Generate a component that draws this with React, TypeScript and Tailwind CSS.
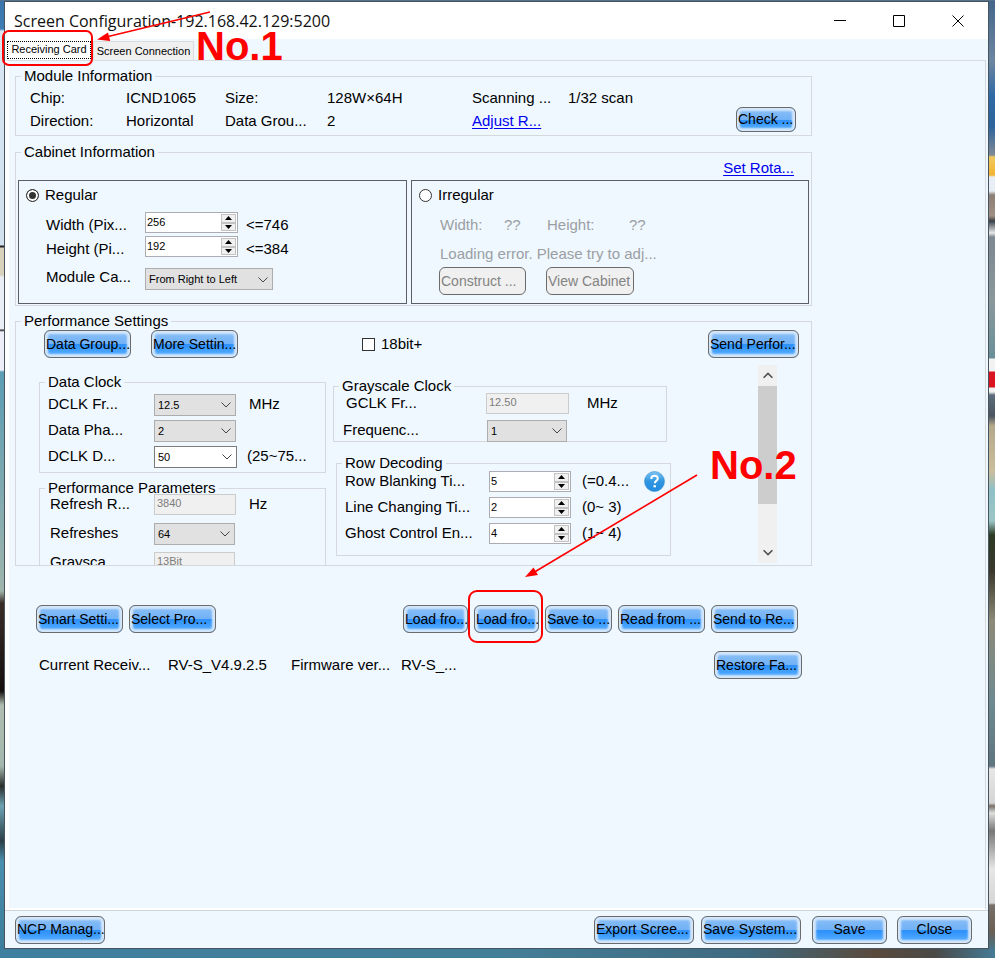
import type React from "react"

import { useState } from "react"
import clsx from "clsx"

function GlossyButton({ children, className, disabled }: { children: React.ReactNode; className?: string; disabled?: boolean }) {
  return (
    <button
      type="button"
      disabled={disabled}
      className={clsx(
        "shrink-0 overflow-hidden whitespace-nowrap rounded-[6px] border border-[#6b6b6b] px-px text-[14px]",
        disabled
          ? "bg-[#f0f0f0] text-[#838383]"
          : "bg-[linear-gradient(to_bottom,#8cc0f7_0%,#70b1f6_50%,#2c90fb_52%,#5cb2ff_100%)] shadow-[inset_0_0_2px_3px_#d3e6fa]",
        className,
      )}
    >
      {children}
    </button>
  )
}

function Group({ title, className, children }: { title: string; className?: string; children: React.ReactNode }) {
  return (
    <fieldset className={clsx("min-w-0 border border-[#d5d9de]", className)}>
      <legend className="ml-[5px] px-[3px] leading-[18px]">{title}</legend>
      {children}
    </fieldset>
  )
}

function Spinner({ id, value, className }: { id: string; value: number; className?: string }) {
  const [current, setCurrent] = useState(value)

  return (
    <div className={clsx("flex h-[21px] shrink-0 border border-[#abadb3] bg-white", className)}>
      <input
        id={id}
        value={current}
        onChange={(e) => setCurrent(Number(e.target.value) || 0)}
        className="h-[17px] w-0 flex-1 bg-transparent pl-px text-[11px] outline-none"
      />
      <div className="mr-px flex w-[15px] flex-col py-px">
        <button
          type="button"
          aria-label="Increase"
          onClick={() => setCurrent(current + 1)}
          className="flex flex-1 items-center justify-center border border-[#c3c3c3] bg-[#f0f0f0]"
        >
          <svg className="h-1 w-[7px]" viewBox="0 0 7 4">
            <path d="M3.5 0L7 4H0z" />
          </svg>
        </button>
        <button
          type="button"
          aria-label="Decrease"
          onClick={() => setCurrent(current - 1)}
          className="flex flex-1 items-center justify-center border border-[#c3c3c3] bg-[#f0f0f0]"
        >
          <svg className="h-1 w-[7px]" viewBox="0 0 7 4">
            <path d="M0 0h7L3.5 4z" />
          </svg>
        </button>
      </div>
    </div>
  )
}

function Dropdown({ id, value, className, light }: { id: string; value: string; className?: string; light?: boolean }) {
  return (
    <div className={clsx("relative h-[22px] shrink-0", className)}>
      <select
        id={id}
        className={clsx(
          "h-full w-full appearance-none border pl-[3px] text-[11px] outline-none",
          light ? "border-[#7a7a7a] bg-white" : "border-[#adadad] bg-[#e1e1e1]",
        )}
      >
        <option>{value}</option>
      </select>
      <svg
        className="pointer-events-none absolute top-[9px] right-[5px] h-[6px] w-[10px]"
        viewBox="0 0 10 6"
        fill="none"
        stroke="#444"
      >
        <path d="M0.5 0.5L5 5l4.500-4.500" />
      </svg>
    </div>
  )
}

function ReadOnly({ id, value, className }: { id: string; value: string; className?: string }) {
  return (
    <input
      id={id}
      disabled
      defaultValue={value}
      className={clsx("h-[21px] shrink-0 border border-[#cccccc] bg-[#f0f0f0] pb-[2px] pl-[2px] text-[11px] text-[#7d7d7d]", className)}
    />
  )
}

function Radio({ label, checked, onSelect }: { label: string; checked: boolean; onSelect: () => void }) {
  return (
    <label className="flex h-5 items-center gap-[6px]">
      <input
        type="radio"
        name="cabinet"
        checked={checked}
        onChange={onSelect}
        className="size-[13px] appearance-none rounded-full border border-[#333] bg-white checked:bg-[#333] checked:shadow-[inset_0_0_0_2px_white]"
      />
      {label}
    </label>
  )
}

function TitleBar() {
  return (
    <header className="flex h-[37px] items-center bg-white pr-px pl-[9px]">
      <h1 className="flex-1 font-['Open_Sans','Noto_Sans',sans-serif] text-[16px] text-[#111]">
        Screen Configuration-192.168.42.129:5200
      </h1>
      <button type="button" aria-label="Minimize" className="flex h-full w-[59px] items-center justify-center">
        <svg className="size-3" viewBox="0 0 12 12" stroke="black">
          <path d="M0 5.5h12" />
        </svg>
      </button>
      <button type="button" aria-label="Maximize" className="flex h-full w-[59px] items-center justify-center">
        <svg className="size-3" viewBox="0 0 12 12" fill="none" stroke="black">
          <path d="M0.5 0.5h11v11h-11z" />
        </svg>
      </button>
      <button type="button" aria-label="Close window" className="flex h-full w-[59px] items-center justify-center">
        <svg className="size-3" viewBox="0 0 12 12" fill="none" stroke="black">
          <path d="M0.5 0.5l11 11M11.500 0.5l-11 11" />
        </svg>
      </button>
    </header>
  )
}

function ModuleInformation() {
  return (
    <Group title="Module Information">
      <div className="flex items-end justify-between pt-px pr-[15px] pb-[3px] pl-[14px]">
        <dl className="grid grid-cols-[96px_99px_102px_145px_96px_auto] leading-[23px] whitespace-nowrap">
          <dt>Chip:</dt>
          <dd>ICND1065</dd>
          <dt>Size:</dt>
          <dd>128W×64H</dd>
          <dt>Scanning ...</dt>
          <dd>1/32 scan</dd>
          <dt>Direction:</dt>
          <dd>Horizontal</dd>
          <dt>Data Grou...</dt>
          <dd>2</dd>
          <dt>
            <a href="#adjust" className="text-[#0000ee] underline underline-offset-2">
              Adjust R...
            </a>
          </dt>
        </dl>
        <GlossyButton className="h-[25px] w-[60px] text-left">Check ...</GlossyButton>
      </div>
    </Group>
  )
}

function CabinetInformation() {
  const [kind, setKind] = useState("regular")

  return (
    <Group title="Cabinet Information" className="mt-[7px]">
      <div className="flex h-[19px] items-start justify-end pr-[17px]">
        <a href="#rotation" className="leading-[14px] text-[#0000ee] underline underline-offset-2">
          Set Rota...
        </a>
      </div>
      <div className="flex gap-1 px-[2px] pb-px">
        <section className="h-[124px] w-[389px] border border-[#5c6066] pt-1 pl-[7px]">
          <Radio label="Regular" checked={kind === "regular"} onSelect={() => setKind("regular")} />
          <div className="mt-[7px] flex flex-col gap-[3px] pl-5">
            <div className="flex items-end leading-4">
              <label htmlFor="cab-width" className="w-[99px]">Width (Pix...</label>
              <Spinner id="cab-width" value={256} className="w-[93px]" />
              <span className="pl-2">&lt;=746</span>
            </div>
            <div className="flex items-end leading-4">
              <label htmlFor="cab-height" className="w-[99px]">Height (Pi...</label>
              <Spinner id="cab-height" value={192} className="w-[93px]" />
              <span className="pl-2">&lt;=384</span>
            </div>
            <div className="mt-2 flex items-start leading-[18px]">
              <label htmlFor="cascade" className="w-[99px]">Module Ca...</label>
              <Dropdown id="cascade" value="From Right to Left" className="w-[128px]" />
            </div>
          </div>
        </section>
        <section className="h-[124px] flex-1 border border-[#5c6066] pt-1 pl-[7px]">
          <Radio label="Irregular" checked={kind === "irregular"} onSelect={() => setKind("irregular")} />
          <div className="pl-5 text-[#9b9fa3]">
            <div className="flex h-10 items-center pl-px">
              <span className="w-16">Width:</span>
              <span className="w-[43px]">??</span>
              <span className="w-[82px]">Height:</span>
              <span>??</span>
            </div>
            <p className="pb-1 pl-px leading-[18px]">Loading error. Please try to adj...</p>
            <div className="flex gap-5">
              <GlossyButton disabled className="h-7 w-[87px] text-left">Construct ...</GlossyButton>
              <GlossyButton disabled className="h-7 w-[88px] text-left">View Cabinet</GlossyButton>
            </div>
          </div>
        </section>
      </div>
    </Group>
  )
}

function HelpIcon() {
  return (
    <svg className="size-[21px]" viewBox="0 0 21 21">
      <defs>
        <linearGradient id="help-fill" x1="0" y1="0" x2="0" y2="1">
          <stop offset="0" stopColor="#7cc4f5" />
          <stop offset="0.500" stopColor="#2f95e0" />
          <stop offset="1" stopColor="#1f8be0" />
        </linearGradient>
      </defs>
      <circle cx="10.500" cy="10.500" r="10" fill="url(#help-fill)" stroke="#3c8fd0" strokeWidth="0.600" />
      <path
        d="M7.300 8c0-2 1.400-3.200 3.300-3.200s3.200 1.100 3.200 2.800c0 2.300-3 2.300-3 4.700"
        fill="none"
        stroke="white"
        strokeWidth="2"
      />
      <circle cx="10.700" cy="15.300" r="1.300" fill="white" />
    </svg>
  )
}

function PerformanceSettings() {
  return (
    <Group title="Performance Settings" className="mt-[6px]">
      <div className="flex h-7 items-center pr-3 pl-7">
        <GlossyButton className="h-7 w-[87px] text-left">Data Group...</GlossyButton>
        <GlossyButton className="ml-5 h-7 w-[87px] text-left">More Settin...</GlossyButton>
        <label className="ml-[124px] flex items-center gap-[6px]">
          <input type="checkbox" className="size-[13px] appearance-none border border-[#333] bg-white checked:bg-[#333]" />
          18bit+
        </label>
        <GlossyButton className="ml-auto h-7 w-[91px] text-left">Send Perfor...</GlossyButton>
      </div>

      <div className="mt-[7px] flex h-[200px] items-start overflow-hidden pl-[23px]">
        <div className="w-[287px] shrink-0 pt-2">
          <Group title="Data Clock" className="pb-[3px]">
            <div className="flex h-[26px] items-center pl-2">
              <label htmlFor="dclk" className="w-[106px]">DCLK Fr...</label>
              <Dropdown id="dclk" value="12.5" className="w-[82px]" />
              <span className="pl-[13px]">MHz</span>
            </div>
            <div className="flex h-[26px] items-center pl-2">
              <label htmlFor="phase" className="w-[106px]">Data Pha...</label>
              <Dropdown id="phase" value="2" className="w-[82px]" />
            </div>
            <div className="flex h-[26px] items-center pl-2">
              <label htmlFor="duty" className="w-[106px]">DCLK D...</label>
              <Dropdown id="duty" value="50" light className="w-[83px]" />
              <span className="pl-[10px]">(25~75...</span>
            </div>
          </Group>
          <Group title="Performance Parameters" className="mt-[6px]">
            <div className="relative -mt-1 flex flex-col gap-[7px] pl-[10px]">
              <div className="flex h-[22px] items-center">
                <label htmlFor="refresh-rate" className="w-[104px]">Refresh R...</label>
                <ReadOnly id="refresh-rate" value="3840" className="w-[82px]" />
                <span className="pl-[13px]">Hz</span>
              </div>
              <div className="flex h-[22px] items-center">
                <label htmlFor="refreshes" className="w-[104px]">Refreshes</label>
                <Dropdown id="refreshes" value="64" className="w-[81px]" />
              </div>
              <div className="flex h-[22px] items-center">
                <label htmlFor="grayscale" className="w-[104px]">Graysca...</label>
                <ReadOnly id="grayscale" value="13Bit" className="w-[81px]" />
              </div>
            </div>
          </Group>
        </div>

        <div className="ml-[7px] w-[338px] shrink-0 pt-3">
          <Group title="Grayscale Clock" className="mr-1">
            <div className="relative -mt-[3px] flex flex-col gap-[5px] pl-[9px]">
              <div className="flex h-[22px] items-center">
                <label htmlFor="gclk" className="w-[143px] pl-[3px]">GCLK Fr...</label>
                <ReadOnly id="gclk" value="12.50" className="w-[83px]" />
                <span className="pl-[18px]">MHz</span>
              </div>
              <div className="flex h-[22px] items-center">
                <label htmlFor="frequency" className="w-[144px]">Frequenc...</label>
                <Dropdown id="frequency" value="1" className="w-20" />
              </div>
            </div>
          </Group>
          <Group title="Row Decoding" className="mt-3 ml-[3px] pb-[11px]">
            <div className="relative -mt-px flex flex-col gap-[5px] pl-2">
              <div className="flex h-[21px] items-center">
                <label htmlFor="blanking" className="w-36">Row Blanking Ti...</label>
                <Spinner id="blanking" value={5} className="w-[82px]" />
                <span className="w-[73px] pl-[11px]">(=0.4...</span>
                <button type="button" aria-label="Help">
                  <HelpIcon />
                </button>
              </div>
              <div className="flex h-[21px] items-center">
                <label htmlFor="line-change" className="w-36">Line Changing Ti...</label>
                <Spinner id="line-change" value={2} className="w-[82px]" />
                <span className="pl-[11px]">(0~ 3)</span>
              </div>
              <div className="flex h-[21px] items-center">
                <label htmlFor="ghost" className="w-36">Ghost Control En...</label>
                <Spinner id="ghost" value={4} className="w-[82px]" />
                <span className="pl-[11px]">(1~ 4)</span>
              </div>
            </div>
          </Group>
        </div>

        <div className="mr-[34px] ml-auto flex h-[198px] w-[19px] flex-col bg-[#f0f0f0]">
          <button type="button" aria-label="Scroll up" className="flex h-[21px] items-center justify-center">
            <svg className="h-[7px] w-[10px]" viewBox="0 0 10 7" fill="none" stroke="#505050" strokeWidth="1.600">
              <path d="M0.6 5.8L5 1.400l4.400 4.400" />
            </svg>
          </button>
          <div className="h-[118px] bg-[#cdcdcd]" />
          <button type="button" aria-label="Scroll down" className="mt-auto flex h-[21px] items-center justify-center">
            <svg className="h-[7px] w-[10px]" viewBox="0 0 10 7" fill="none" stroke="#505050" strokeWidth="1.600">
              <path d="M0.6 1.200L5 5.600l4.400-4.400" />
            </svg>
          </button>
        </div>
      </div>
    </Group>
  )
}

function Annotations() {
  return (
    <div className="pointer-events-none absolute top-0 left-0 font-bold text-[#ff0000]">
      <svg className="h-[660px] w-[820px]" viewBox="0 0 820 660" fill="none" stroke="#f00" strokeWidth="2">
        <rect x="3" y="31" width="89" height="34" rx="6" />
        <path d="M210 12L106 37" strokeWidth="1.600" />
        <path d="M97 39.500L108 32.500l2.200 8.500z" fill="#f00" stroke="none" />
        <rect x="469" y="591" width="73" height="51" rx="8" />
        <path d="M697 475L532 573.500" strokeWidth="1.600" />
        <path d="M525 577L533.500 567.500l4.500 7.500z" fill="#f00" stroke="none" />
      </svg>
      <span className="absolute top-[26px] left-[196px] text-[40px] leading-10">No.1</span>
      <span className="absolute top-[445px] left-[710px] text-[40px] leading-10">No.2</span>
    </div>
  )
}

export default function App() {
  return (
    <div className="relative flex min-h-screen flex-col bg-[linear-gradient(to_right,#3f7f9f_0%,#447f98_50%,#3f6a80_75%,#5a4a3c_88%,#4a4a48_94%,#457b96_100%)] font-['Liberation_Sans',Arial,sans-serif] text-[15px] text-black">
      <div className="h-px bg-[#56718a]" />
      <div className="flex flex-1">
        {/* slices of the desktop beside the window */}
        <div className="w-1 bg-[linear-gradient(to_bottom,#3a76ad_0px,#3f7db5_28px,#d9e6f2_30px,#d3e0ee_244px,#222_245px,#222_246px,#d8d1bb_247px,#d8d1bb_274px,#eceef5_276px,#eceef5_328px,#222_329px,#eeeef8_331px,#eeeef8_369px,#5c9db4_371px,#9fb5ac_590px,#3a2d28_602px,#140f0e_690px,#b0bdb0_704px,#a5b8ae_765px,#2b2f2c_785px,#6da3b3_805px,#2c3f45_840px,#4b8fae_860px,#3b7d9b_100%)]" />

        <div className="flex min-w-0 flex-1 flex-col border border-[#46545f] bg-[#eff7ff]">
          <TitleBar />

          <nav role="tablist" className="flex h-[21px] items-end gap-px">
            <button
              type="button"
              role="tab"
              aria-selected="true"
              className="h-[21px] w-[87px] bg-white pl-[2px] text-[11px]"
            >
              <span className="block h-[18px] w-[84px] border border-dotted border-black leading-[15px]">Receiving Card</span>
            </button>
            <button
              type="button"
              role="tab"
              aria-selected="false"
              className="h-[19px] w-[101px] border border-b-0 border-[#dcdcdc] bg-[#f0f0f0] text-[11px] whitespace-nowrap"
            >
              Screen Connection
            </button>
          </nav>

          <main className="mr-[2px] flex flex-1 flex-col border-4 border-t border-r border-b-2 border-white border-t-[#d9dde2] border-r-[#d5d9de]">
            <div className="w-full max-w-[803px] pt-[6px] pl-[6px]">
              <ModuleInformation />
              <CabinetInformation />
              <PerformanceSettings />

              <div className="mt-[39px] flex pr-[14px] pl-[21px]">
                <GlossyButton className="h-7 w-[87px] text-left">Smart Setti...</GlossyButton>
                <GlossyButton className="ml-[6px] h-7 w-[87px] text-left">Select Pro...</GlossyButton>
                <div className="ml-auto flex gap-[6px]">
                  <GlossyButton className="h-7 w-[65px] text-left">Load fro...</GlossyButton>
                  <GlossyButton className="h-7 w-[65px] text-left">Load fro...</GlossyButton>
                  <GlossyButton className="h-7 w-[67px] text-left">Save to ...</GlossyButton>
                  <GlossyButton className="h-7 w-[87px] text-left">Read from ...</GlossyButton>
                  <GlossyButton className="h-7 w-[87px] text-left">Send to Re...</GlossyButton>
                </div>
              </div>

              <div className="mt-[18px] flex items-center pr-[10px] pl-6">
                <span className="w-[129px]">Current Receiv...</span>
                <span className="w-[123px]">RV-S_V4.9.2.5</span>
                <span className="w-[110px]">Firmware ver...</span>
                <span>RV-S_...</span>
                <GlossyButton className="ml-auto h-7 w-[88px] text-left">Restore Fa...</GlossyButton>
              </div>
            </div>
          </main>

          <footer className="flex h-[38px] items-center border-t border-[#d0d4d8] pr-4 pl-[10px]">
            <GlossyButton className="h-7 w-[90px] text-left">NCP Manag...</GlossyButton>
            <GlossyButton className="ml-auto h-7 w-[100px] text-left">Export Scree...</GlossyButton>
            <GlossyButton className="ml-[7px] h-7 w-[100px] text-left">Save System...</GlossyButton>
            <GlossyButton className="ml-[11px] h-7 w-[75px]">Save</GlossyButton>
            <GlossyButton className="ml-[10px] h-7 w-[75px]">Close</GlossyButton>
          </footer>
        </div>

        <div className="w-[6px] bg-[linear-gradient(to_bottom,#44668a_0px,#6d86a0_60px,#2f6aa5_95px,#2c639b_125px,#7f8a94_154px,#f0c860_156px,#f2b430_174px,#e8eef5_176px,#e8eef5_190px,#8b7f76_194px,#a08f84_215px,#3a3f48_220px,#e8e8e8_232px,#7d8890_236px,#8a989c_300px,#6a8f98_357px,#f2f2f2_358px,#f2f2f2_370px,#d9131f_371px,#d9131f_386px,#f2f2f2_387px,#eee_391px,#5d6c7a_394px,#4a5560_415px,#b5a98c_425px,#c9bd9c_470px,#8fc0c8_490px,#9cc5c4_520px,#2b3a24_534px,#3a382c_570px,#8d8a78_620px,#6f8a90_700px,#5f7580_765px,#e6e6e6_768px,#d5d5d5_802px,#77706a_805px,#ddd_812px,#777_830px,#e6e6e6_868px,#d5d5d5_902px,#77706a_904px,#6a5f52_930px,#4a7488_100%)]" />
      </div>
      <div className="h-[9px]" />
      <Annotations />
    </div>
  )
}
